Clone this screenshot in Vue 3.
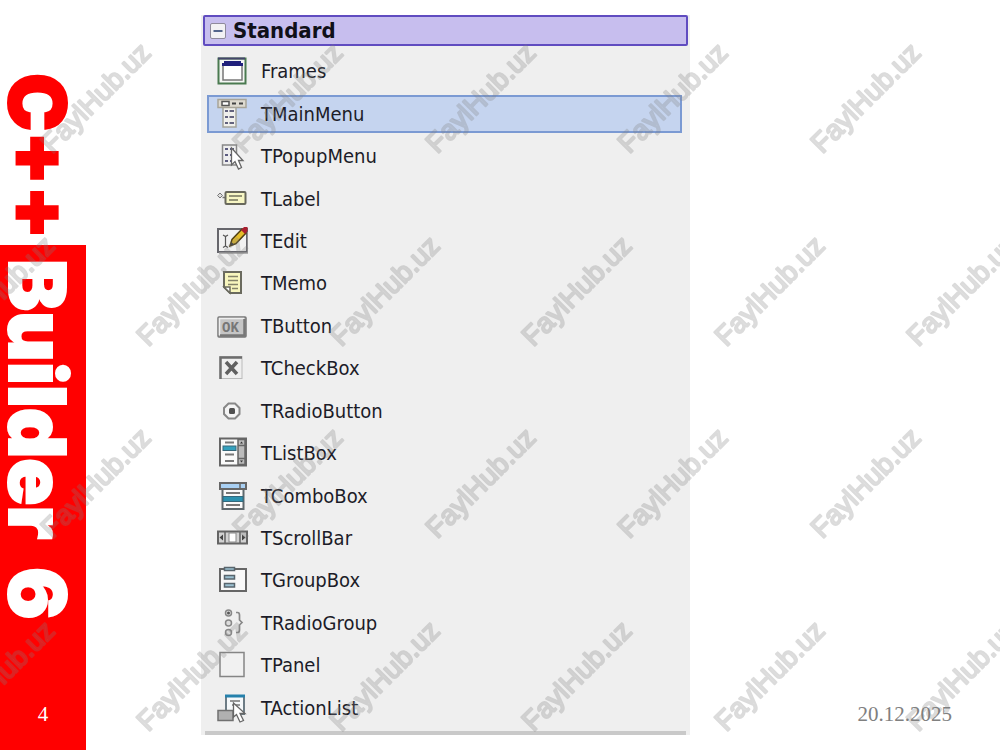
<script setup>
import { ref } from "vue"

const components = [
    { name: "Frames", icon: "frames" },
    { name: "TMainMenu", icon: "mainmenu" },
    { name: "TPopupMenu", icon: "popupmenu" },
    { name: "TLabel", icon: "label" },
    { name: "TEdit", icon: "edit" },
    { name: "TMemo", icon: "memo" },
    { name: "TButton", icon: "button" },
    { name: "TCheckBox", icon: "checkbox" },
    { name: "TRadioButton", icon: "radio" },
    { name: "TListBox", icon: "listbox" },
    { name: "TComboBox", icon: "combobox" },
    { name: "TScrollBar", icon: "scrollbar" },
    { name: "TGroupBox", icon: "groupbox" },
    { name: "TRadioGroup", icon: "radiogroup" },
    { name: "TPanel", icon: "panel" },
    { name: "TActionList", icon: "actionlist" },
]

const selected = ref("TMainMenu")
const isOpen = ref(true)
</script>

<template>
    <div class="slide">
        <aside class="side">
            <div class="side-top">C++</div>
            <div class="side-bottom">
                <div class="side-words">
                    <span>Builder</span>
                    <span>6</span>
                </div>
                <span class="page-number">4</span>
            </div>
        </aside>

        <main class="palette">
            <header class="palette-header">
                <button
                    class="toggle"
                    aria-label="Standard"
                    @click="isOpen = !isOpen"
                >
                    <svg width="18" height="18" viewBox="0 0 18 18">
                        <rect x="1.5" y="1.5" width="15" height="15" rx="1.5" fill="#f2f1f4" stroke="#8f8a9c" />
                        <path d="M4.5 9H13.5" stroke="#54658c" stroke-width="2" />
                        <path v-if="!isOpen" d="M9 4.5V13.5" stroke="#54658c" stroke-width="2" />
                    </svg>
                </button>
                <h2>Standard</h2>
            </header>
            <ul v-show="isOpen" class="items">
                <li v-for="item in components" :key="item.name">
                    <button
                        class="item"
                        :class="{ active: selected === item.name }"
                        @click="selected = item.name"
                    >
                        <svg class="icon" viewBox="0 0 32 32">
                            <use :href="'#i-' + item.icon" />
                        </svg>
                        {{ item.name }}
                    </button>
                </li>
            </ul>
            <div class="palette-end"></div>
        </main>

        <footer class="date">20.12.2025</footer>

        <svg class="watermark" aria-hidden="true">
            <defs>
                <pattern id="mark" width="385" height="385" patternUnits="userSpaceOnUse">
                    <g class="mark-text">
                        <text transform="translate(96 98) rotate(-45)" y="9">FaylHub.uz</text>
                        <text transform="translate(288 98) rotate(-45)" y="9">FaylHub.uz</text>
                        <text transform="translate(0 291) rotate(-45)" y="9">FaylHub.uz</text>
                        <text transform="translate(192 291) rotate(-45)" y="9">FaylHub.uz</text>
                        <text transform="translate(385 291) rotate(-45)" y="9">FaylHub.uz</text>
                    </g>
                </pattern>
            </defs>
            <rect width="100%" height="100%" fill="url(#mark)" />
        </svg>

        <!-- icon set -->
        <svg width="0" height="0" class="sprite">
            <symbol id="i-frames" viewBox="0 0 32 32">
                <rect x="2.5" y="3.5" width="27" height="25" fill="#f4f6f4" stroke="#4a7a50" stroke-width="2" />
                <path d="M2 3.500H29" stroke="#44466a" stroke-width="2" />
                <rect x="7" y="10" width="19" height="15" fill="#fff" stroke="#777" stroke-width="1.5" />
                <path d="M6 9.500H27M8 7.500H25" stroke="#20207c" stroke-width="3" />
            </symbol>
            <symbol id="i-mainmenu" viewBox="0 0 32 32">
                <rect x="7" y="9" width="13" height="20" fill="#f0f0ec" stroke="#a4a49c" stroke-width="1.5" />
                <rect x="2" y="1.5" width="28" height="8" fill="#dedad0" stroke="#a8a498" stroke-width="1.5" />
                <rect x="6" y="3.5" width="7" height="4" fill="#fff" stroke="#555" stroke-width="1.5" />
                <path d="M16 5.500H20M23 5.500H27" stroke="#444" stroke-width="2" />
                <path d="M9 13H12M13.500 13H18M9 19H12M13.500 19H18M9 25H12M13.500 25H18" stroke="#62627e" stroke-width="2" />
            </symbol>
            <symbol id="i-popupmenu" viewBox="0 0 32 32">
                <rect x="6.5" y="5" width="14" height="20" fill="#eee" stroke="#888" stroke-width="1.5" />
                <path d="M9 9H12M14 9H18M9 15H12M14 15H18M9 21H12M14 21H18" stroke="#5c5c80" stroke-width="2" />
                <path d="M15.500 8V25L19 21.500L22.500 29L25.500 27.500L22.500 20.500H27Z" fill="#fff" stroke="#666" stroke-width="1.3" />
            </symbol>
            <symbol id="i-label" viewBox="0 0 32 32">
                <path d="M4 10L6.500 12.500L4 15L1.500 12.500Z" fill="#ddd" stroke="#777" />
                <path d="M6.500 14.500H9" stroke="#777" stroke-width="1.5" />
                <rect x="9.5" y="9" width="20" height="12" rx="1" fill="#f7f6c4" stroke="#68685c" stroke-width="2" />
                <path d="M13 13H26M13 17H22" stroke="#74745c" stroke-width="1.5" />
            </symbol>
            <symbol id="i-edit" viewBox="0 0 32 32">
                <rect x="2" y="4" width="29" height="23" fill="#f1f1f1" stroke="#66666c" stroke-width="2" />
                <path d="M3 28H32V7" fill="none" stroke="#9a9a9a" stroke-width="1.5" />
                <path d="M7 10L9.500 11.500L12 10M9.500 11V21M7 22.500L9.500 21L12 22.500" fill="none" stroke="#555" stroke-width="1.2" />
                <path d="M14 21L16 14.500L26 4L30 8L20 18.500Z" fill="#e5bd29" stroke="#514013" stroke-width="1.5" />
                <path d="M25 5L28 2H31.500V6L29 9Z" fill="#a91f2f" />
                <path d="M14 21L15.500 17L18 19.500Z" fill="#333" />
            </symbol>
            <symbol id="i-memo" viewBox="0 0 32 32">
                <path d="M9 5H25V26H14L8 20V5Z" fill="#f8f6be" stroke="#6a6a5e" stroke-width="2" />
                <path d="M8 20H14V26Z" fill="#fff" stroke="#6a6a5e" stroke-width="1.5" />
                <path d="M12 9.500H22M12 13.500H22M12 17.500H22M16 21.500H22" stroke="#85836a" stroke-width="1.5" />
            </symbol>
            <symbol id="i-button" viewBox="0 0 32 32">
                <rect x="2" y="7" width="28" height="20" rx="1" fill="#c5c5c5" stroke="#777" stroke-width="1.5" />
                <path d="M3.500 25V8.500H28" fill="none" stroke="#eee" stroke-width="1.5" />
                <path d="M4 25.500H28.500V9" fill="none" stroke="#777" stroke-width="2.5" />
                <text x="14.5" y="21.5" text-anchor="middle" font-family="Liberation Mono, monospace" font-size="14" font-weight="700" fill="#777">OK</text>
            </symbol>
            <symbol id="i-checkbox" viewBox="0 0 32 32">
                <rect x="4" y="4.5" width="22" height="22" fill="#efefef" stroke="#bbb" />
                <path d="M4.500 27V5.500H26" fill="none" stroke="#6d6d6d" stroke-width="2.5" />
                <path d="M10 10L21 22M21 10L10 22" stroke="#606060" stroke-width="3.5" />
            </symbol>
            <symbol id="i-radio" viewBox="0 0 32 32">
                <path d="M12.500 8.500H19L23.500 13V19L19 23.500H12.500L8 19V13Z" fill="#f5f5f5" stroke="#888" stroke-width="2" />
                <rect x="13" y="13" width="6" height="6" rx="1.5" fill="#505050" />
            </symbol>
            <symbol id="i-listbox" viewBox="0 0 32 32">
                <rect x="4" y="1.5" width="26" height="27" fill="#fafafa" stroke="#666" stroke-width="2" />
                <rect x="22" y="2.5" width="7" height="25" fill="#bbb" stroke="#666" stroke-width="1.5" />
                <path d="M22 8.500H29M22 21.500H29" stroke="#666" stroke-width="1.5" />
                <path d="M24 6.500L25.500 4.500L27 6.500ZM24 23.500L25.500 25.500L27 23.500Z" fill="#333" />
                <path d="M9 5.500H18M9 17.500H18M9 24H18" stroke="#777" stroke-width="2" />
                <rect x="7" y="9" width="13" height="4.5" fill="#34a0bd" stroke="#37687a" />
            </symbol>
            <symbol id="i-combobox" viewBox="0 0 32 32">
                <rect x="6.5" y="8" width="21" height="21" fill="#fafafa" stroke="#5e686d" stroke-width="2" />
                <rect x="4" y="3" width="26" height="6" fill="#a9d0f3" stroke="#666" stroke-width="2" />
                <path d="M24 3V9" stroke="#666" stroke-width="1.5" />
                <path d="M10 13H24M10 25H24" stroke="#777" stroke-width="2" />
                <rect x="7" y="16.5" width="20" height="5" fill="#2d91af" stroke="#35697c" />
            </symbol>
            <symbol id="i-scrollbar" viewBox="0 0 32 32">
                <rect x="2" y="9.5" width="29" height="12" fill="#d2d2d2" stroke="#646464" stroke-width="2" />
                <path d="M9 9V22M24 9V22" stroke="#646464" stroke-width="1.5" />
                <path d="M7 12.500L3.500 15.500L7 18.500ZM26 12.500L29.500 15.500L26 18.500Z" fill="#444" />
                <rect x="13" y="11" width="7" height="9" fill="#fff" stroke="#888" />
            </symbol>
            <symbol id="i-groupbox" viewBox="0 0 32 32">
                <rect x="4" y="5" width="26" height="22" fill="#f8f8f8" stroke="#666" stroke-width="2" />
                <rect x="8.5" y="3.5" width="10" height="3" fill="#9bc0d1" stroke="#58656d" stroke-width="1.5" />
                <rect x="8.5" y="11.5" width="10" height="3.5" fill="#9bc0d1" stroke="#58656d" stroke-width="1.5" />
                <rect x="8.5" y="19.5" width="10" height="3.5" fill="#9bc0d1" stroke="#58656d" stroke-width="1.5" />
            </symbol>
            <symbol id="i-radiogroup" viewBox="0 0 32 32">
                <g fill="#ddd" stroke="#888" stroke-width="1.5">
                    <circle cx="12.5" cy="6" r="3" />
                    <circle cx="12.5" cy="16" r="3" />
                    <circle cx="12.5" cy="25.5" r="3" />
                </g>
                <circle cx="12.5" cy="6" r="1.5" fill="#555" />
                <path d="M20 5.500H21.500Q23.500 5.500 23.500 8V13L26 15.500L23.500 18V23Q23.500 25.500 21.500 25.500H20" fill="none" stroke="#888" stroke-width="1.7" />
            </symbol>
            <symbol id="i-panel" viewBox="0 0 32 32">
                <rect x="4" y="3.5" width="24" height="24" fill="#f1f1f1" stroke="#858585" stroke-width="1.5" />
            </symbol>
            <symbol id="i-actionlist" viewBox="0 0 32 32">
                <rect x="10" y="4" width="18" height="18" fill="#f5f8fa" stroke="#6d7c85" stroke-width="2" />
                <path d="M9 4H29" stroke="#2581ac" stroke-width="3" />
                <path d="M14 9H24M16 13H24" stroke="#777" stroke-width="1.5" />
                <rect x="2" y="18.5" width="15" height="10" fill="#b0b0b0" stroke="#707070" stroke-width="1.5" />
                <path d="M17.500 11V25L20.500 22.500L24 30L27.500 28.500L24 21.500H29Z" fill="#fff" stroke="#666" stroke-width="1.3" />
            </symbol>
        </svg>
    </div>
</template>

<style>
body {
    margin: 0;
    background: #fff;
}
</style>

<style scoped>
.slide {
    position: relative;
    display: grid;
    grid-template-columns: 86px minmax(0, 604fr) minmax(0, 310fr);
    min-height: 100vh;
    overflow: hidden;
}

.side {
    display: flex;
    flex-direction: column;
    font-family: Inter, "Liberation Sans", sans-serif;
    font-size: 78px;
    font-weight: 900;
    line-height: 75px;
    white-space: nowrap;
    -webkit-text-stroke: 2px currentColor;
}

.side-top,
.side-words {
    width: 75px;
    writing-mode: vertical-rl;
}

.side-top {
    box-sizing: border-box;
    height: 245px;
    padding-top: 73px;
    color: #f00;
}

.side-words {
    display: flex;
    gap: 28px;
}

.side-bottom {
    flex: 1;
    display: flex;
    flex-direction: column;
    justify-content: space-between;
    padding: 14px 0 24px;
    background: #f00;
    color: #fff;
}

.page-number {
    font-family: "Liberation Serif", serif;
    font-size: 21px;
    font-weight: 400;
    line-height: 24px;
    text-align: center;
    -webkit-text-stroke: 0;
}

.palette {
    display: flex;
    flex-direction: column;
    margin: 15px 0 15px 115px;
    background: #efefef;
    font-family: "DejaVu Sans Condensed", "DejaVu Sans", sans-serif;
    font-size: 20px;
    color: #1c1c28;
}

.palette-header {
    box-sizing: border-box;
    display: flex;
    align-items: center;
    gap: 6px;
    height: 31px;
    margin: 0 2px;
    padding: 0 4px;
    border: 2px solid #604cc0;
    border-radius: 2px;
    background: #c7beee;
}

.palette-header h2 {
    margin: 0;
    font-size: 22px;
    line-height: 26px;
    color: #101018;
}

.toggle {
    display: flex;
    padding: 0;
    border: none;
    background: none;
    cursor: pointer;
}

.items {
    flex: 1;
    display: flex;
    flex-direction: column;
    margin: 4px 8px 0 6px;
    padding: 0;
    list-style: none;
}

.items li {
    flex: 1;
    display: flex;
    align-items: center;
}

.item {
    box-sizing: border-box;
    display: flex;
    align-items: center;
    gap: 13px;
    width: 100%;
    height: 38px;
    padding: 0 7px;
    border: 2px solid transparent;
    background: none;
    font: inherit;
    color: inherit;
    text-align: left;
    cursor: pointer;
}

.item.active {
    border-color: #7b9ad3;
    background: #c5d4ef;
}

.icon {
    width: 32px;
    height: 32px;
}

.palette-end {
    height: 4px;
    margin: 2px 4px 0;
    background: #c9c9c9;
}

.date {
    align-self: end;
    justify-self: end;
    padding: 0 48px 24px 0;
    font-family: "Liberation Serif", serif;
    font-size: 21px;
    line-height: 24px;
    color: #808080;
}

.watermark {
    position: absolute;
    inset: 0;
    width: 100%;
    height: 100%;
    pointer-events: none;
}

.mark-text {
    font-family: "Liberation Sans", sans-serif;
    font-size: 28px;
    text-anchor: middle;
    fill: #909090;
    stroke: #7c7c7c;
    stroke-width: 2px;
    stroke-linejoin: round;
    opacity: 0.28;
}

.sprite {
    position: absolute;
}
</style>
